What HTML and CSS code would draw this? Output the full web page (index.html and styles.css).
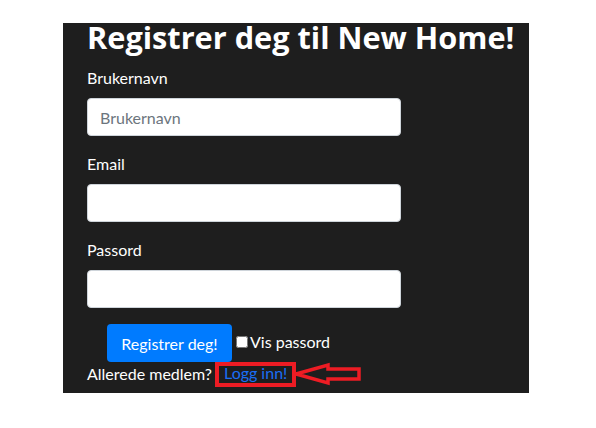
FILE: index.html
```html
<!DOCTYPE html>
<html lang="no">
<head>
<meta charset="utf-8">
<title>Registrer deg</title>
<link rel="stylesheet" href="styles.css">
</head>
<body>
<div class="panel">
  <h1 class="title">Registrer deg til New Home!</h1>
  <form class="form">
    <div class="group">
      <label class="label" for="u">Brukernavn</label>
      <input class="input" id="u" type="text" placeholder="Brukernavn">
    </div>
    <div class="group">
      <label class="label" for="e">Email</label>
      <input class="input" id="e" type="email">
    </div>
    <div class="group">
      <label class="label" for="p">Passord</label>
      <input class="input" id="p" type="password">
    </div>
    <div class="actions">
      <button class="btn" type="button">Registrer deg!</button>
      <label class="show"><input class="check" type="checkbox">Vis passord</label>
    </div>
    <div class="member">
      <span class="member-text">Allerede medlem?</span><a class="link" href="#">Logg inn!</a><svg class="arrow" width="70" height="24" viewBox="0 0 70 24"><polygon points="3,12 35,3 35,7 66,7 66,17 35,17 35,21" fill="none" stroke="#ed1c24" stroke-width="3.5" stroke-linejoin="miter"/></svg>
    </div>
  </form>
</div>
</body>
</html>
```
FILE: styles.css
```css
body {
  margin: 0;
  background: #ffffff;
  font-family: Lato, "Liberation Sans", sans-serif;
}
.panel {
  margin: 23px 0 0 63px;
  width: 466px;
  background: #1e1e1e;
  color: #ffffff;
  padding: 0 24px 7px;
  box-sizing: border-box;
}
.title {
  margin: 0 0 14px;
  font-family: "Open Sans", "Noto Sans", sans-serif;
  font-size: 30.7px;
  font-weight: 700;
  line-height: 29px;
  white-space: nowrap;
}
.form {
  font-size: 16px;
}
.group {
  margin-bottom: 16px;
}
.label {
  display: block;
  line-height: 24px;
  margin-bottom: 8px;
}
.input {
  display: block;
  width: 314px;
  height: 38px;
  box-sizing: border-box;
  border: 1px solid #ced4da;
  border-radius: 4px;
  padding: 6px 12px;
  font: inherit;
  font-size: 16px;
  color: #495057;
  background: #fff;
}
.input::placeholder {
  color: #6c757d;
}
.actions {
  display: flex;
  align-items: flex-start;
}
.btn {
  margin-left: 20px;
  width: 125px;
  height: 38px;
  border: 0;
  border-radius: 4px;
  background: #007bff;
  color: #fff;
  font: inherit;
  font-size: 16px;
  padding: 6px 12px;
}
.show {
  margin-top: 6px;
  line-height: 24px;
  margin-left: 4px;
}
.check {
  margin: 0 2px 0 0;
  width: 12px;
  height: 12px;
}
.member {
  line-height: 24px;
  display: flex;
  align-items: center;
}
.link {
  display: inline-block;
  color: #1a6ef5;
  text-decoration: none;
  margin-left: 7px;
  padding: 0 5px;
  height: 17px;
  line-height: 14px;
  outline: 4px solid #ed1c24;
}
.arrow {
  margin-left: 1px;
}
```
